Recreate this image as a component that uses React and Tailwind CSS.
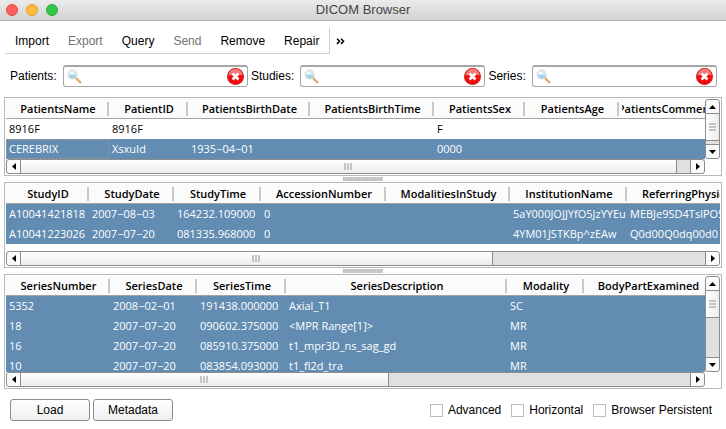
import React from "react";

const patients = {
  columns: [
    ["PatientsName", 103],
    ["PatientID", 79],
    ["PatientsBirthDate", 122],
    ["PatientsBirthTime", 124],
    ["PatientsSex", 91],
    ["PatientsAge", 94],
    ["PatientsComments", 98],
  ],
  rows: [
    { cells: ["8916F", "8916F", "", "", "F", "", ""] },
    { cells: ["CEREBRIX", "XsxuId", "1935−04−01", "", "0000", "", ""], selected: true, focus: true },
  ],
};

const studies = {
  columns: [
    ["StudyID", 83],
    ["StudyDate", 85],
    ["StudyTime", 87],
    ["AccessionNumber", 125],
    ["ModalitiesInStudy", 124],
    ["InstitutionName", 117],
    ["ReferringPhysicianName", 160],
  ],
  rows: [
    { cells: ["A10041421818", "2007−08−03", "164232.109000", "0", "", "5aY000JOJJYfO5JzYYEu", "MEBJe9SD4TslPO5z"], selected: true },
    { cells: ["A10041223026", "2007−07−20", "081335.968000", "0", "", "4YM01JSTKBp^zEAw", "Q0d00Q0dq00d0"], selected: true },
  ],
};

const series = {
  columns: [
    ["SeriesNumber", 104],
    ["SeriesDate", 87],
    ["SeriesTime", 89],
    ["SeriesDescription", 221],
    ["Modality", 77],
    ["BodyPartExamined", 128],
  ],
  rows: [
    { cells: ["5352", "2008−02−01", "191438.000000", "Axial_T1", "SC", ""], selected: true },
    { cells: ["18", "2007−07−20", "090602.375000", "<MPR Range[1]>", "MR", ""], selected: true },
    { cells: ["16", "2007−07−20", "085910.375000", "t1_mpr3D_ns_sag_gd", "MR", ""], selected: true },
    { cells: ["10", "2007−07−20", "083854.093000", "t1_fl2d_tra", "MR", ""], selected: true },
  ],
};

const arrows = {
  up: "M0 4h7L3.5 0z",
  down: "M0 0h7L3.5 4z",
  left: "M4 0v7L0 3.5z",
  right: "M0 0v7L4 3.5z",
};

function Arrow({ dir }) {
  const flat = dir === "up" || dir === "down";
  return (
    <svg width={flat ? 7 : 4} height={flat ? 4 : 7} aria-hidden="true">
      <path d={arrows[dir]} fill="#000" />
    </svg>
  );
}

function Magnifier() {
  return (
    <svg width="16" height="16" viewBox="0 0 16 16" className="shrink-0" aria-hidden="true">
      <path d="M9.3 9.3l4 4" stroke="#d39a4e" strokeWidth="2.2" strokeLinecap="round" />
      <path d="M9.6 9l3.6 3.6" stroke="#f5cf90" strokeWidth="1" strokeLinecap="round" />
      <circle cx="5.6" cy="5.6" r="4.4" fill="#d6edf6" stroke="#d5dce1" strokeWidth="1.2" />
      <path d="M2 5.8h7.2a3.6 3.6 0 0 1-7.2 0z" fill="#a5d4e8" />
      <ellipse cx="4.6" cy="3.7" rx="2.3" ry="1.5" fill="#f6fcff" />
    </svg>
  );
}

function ClearIcon() {
  return (
    <svg width="17" height="17" viewBox="0 0 16 16" aria-hidden="true">
      <circle cx="8" cy="8" r="7.5" fill="#f40909" stroke="#d32020" />
      <path d="M1.4 7.2a6.6 6.4 0 0 1 13.2 0C11 5.6 6 6.2 1.4 7.2z" fill="#f47c7c" />
      <path d="M5.2 5.2l5.6 5.6M10.8 5.2l-5.6 5.6" stroke="#fff" strokeWidth="2.6" />
    </svg>
  );
}

function SearchField({ id, label }) {
  return (
    <>
      <label htmlFor={id} className="pr-[3px]">{label}</label>
      <div className="flex h-[22px] min-w-0 flex-1 items-center rounded-[3px] border border-t-2 border-[#a6a6a6] bg-white px-[3px]">
        <Magnifier />
        <input id={id} type="text" className="min-w-0 flex-1 bg-transparent px-1 outline-none" />
        <button type="button" aria-label={`Clear ${id}`}>
          <ClearIcon />
        </button>
      </div>
    </>
  );
}

function DataTable({ columns, rows }) {
  return (
    <table className="w-max border-separate border-spacing-0">
      <thead>
        <tr>
          {columns.map(([name, width]) => (
            <th key={name} className="h-5 border-b border-[#a3a3a3] bg-[#fbfbfb] p-0 font-semibold">
              <div style={{ width }} className="flex items-center pl-[3px]">
                <div className="flex min-w-0 flex-1 justify-center overflow-hidden whitespace-nowrap">{name}</div>
                <div className="h-[14px] w-[2px] shrink-0 bg-[#c8c8c8]" />
              </div>
            </th>
          ))}
        </tr>
      </thead>
      <tbody>
        {rows.map((row, r) => (
          <tr key={r} className={row.selected ? "bg-[#628cb2] text-white" : "bg-white text-black"}>
            {row.cells.map((cell, c) => (
              <td
                key={c}
                className={
                  row.focus && c === 0
                    ? "h-5 max-w-0 border border-dotted border-[#a59c91] px-[2px] py-0 whitespace-nowrap"
                    : "h-5 max-w-0 px-[3px] py-0 whitespace-nowrap"
                }
              >
                {cell}
              </td>
            ))}
          </tr>
        ))}
      </tbody>
    </table>
  );
}

function HorizontalBar({ thumb }) {
  return (
    <div className="flex h-[15px] rounded-[3px] border border-[#8c8c8c] bg-[#e0e0e0]">
      <button type="button" aria-label="Scroll left" className="flex w-[14px] items-center justify-center rounded-l-[3px] border-r border-[#8c8c8c] bg-[#fafafa]">
        <Arrow dir="left" />
      </button>
      <div className="min-w-0 flex-1">
        <div
          style={{ width: `${thumb}%` }}
          className="flex h-full items-center justify-center gap-px border-r border-[#8c8c8c] bg-linear-to-b from-white to-[#ececec]"
        >
          <i className="h-[7px] w-[2px] bg-[#c4c4c4]" />
          <i className="h-[7px] w-[2px] bg-[#c4c4c4]" />
          <i className="h-[7px] w-[2px] bg-[#c4c4c4]" />
        </div>
      </div>
      <button type="button" aria-label="Scroll right" className="flex w-[14px] items-center justify-center rounded-r-[3px] border-l border-[#8c8c8c] bg-[#fafafa]">
        <Arrow dir="right" />
      </button>
    </div>
  );
}

function VerticalBar() {
  return (
    <div className="flex w-[15px] shrink-0 flex-col rounded-[3px] border border-[#8c8c8c] bg-[#e0e0e0]">
      <button type="button" aria-label="Scroll up" className="flex h-[14px] items-center justify-center rounded-t-[3px] border-b border-[#8c8c8c] bg-[#fafafa]">
        <Arrow dir="up" />
      </button>
      <div className="flex-1">
        <div className="flex h-[27px] flex-col items-center justify-center gap-px border-b border-[#8c8c8c] bg-linear-to-r from-white to-[#ececec]">
          <i className="h-[2px] w-[7px] bg-[#c4c4c4]" />
          <i className="h-[2px] w-[7px] bg-[#c4c4c4]" />
          <i className="h-[2px] w-[7px] bg-[#c4c4c4]" />
        </div>
      </div>
      <button type="button" aria-label="Scroll down" className="flex h-[14px] items-center justify-center rounded-b-[3px] border-t border-[#8c8c8c] bg-[#fafafa]">
        <Arrow dir="down" />
      </button>
    </div>
  );
}

function Panel({ data, height, thumb, vertical }) {
  return (
    <section className="border border-[#b8b8b8] bg-white p-px font-['Open_Sans','Noto_Sans',sans-serif] text-[11px] leading-4">
      <div className="flex">
        <div style={{ height }} className="min-w-0 flex-1 overflow-hidden">
          <DataTable {...data} />
        </div>
        {vertical && <VerticalBar />}
      </div>
      <div className={vertical ? "pr-[15px]" : ""}>
        <HorizontalBar thumb={thumb} />
      </div>
    </section>
  );
}

function Splitter() {
  return (
    <div className="flex h-[6px] items-center justify-center">
      <div className="h-1 w-10 bg-[repeating-linear-gradient(90deg,#bdbdbd_0_1px,#cfcfcf_1px_2px)]" />
    </div>
  );
}

function Check({ id, label }) {
  return (
    <div className="flex items-center gap-[5px]">
      <input id={id} type="checkbox" className="size-[13px] appearance-none border border-[#bdbdbd] bg-white checked:bg-[#628cb2]" />
      <label htmlFor={id}>{label}</label>
    </div>
  );
}

export default function App() {
  const push =
    "h-[22px] w-20 rounded-[3px] border border-[#8c8c8c] bg-linear-to-b from-white to-[#efefef]";
  return (
    <div className="min-h-screen bg-white font-['Liberation_Sans',Arial,sans-serif] text-xs leading-4 text-black">
      <header className="flex h-[21px] items-center border-b border-[#b1b1b1] bg-linear-to-b from-[#ebebeb] to-[#d3d3d3] px-[6px]">
        <div className="flex flex-1 gap-2">
          <span className="size-3 rounded-full border border-[#e2463f] bg-[#fc615d]" />
          <span className="size-3 rounded-full border border-[#dfa023] bg-[#fdbc40]" />
          <span className="size-3 rounded-full border border-[#27aa35] bg-[#34c84a]" />
        </div>
        <h1 className="text-[13px] text-[#454545]">DICOM Browser</h1>
        <div className="flex-1" />
      </header>

      <nav className="flex items-center gap-[6px] pt-[7px] pl-[5px]">
        <div className="flex h-[26px] items-center gap-[19px] border-r border-b border-[#cfcfcf] pr-[10px] pl-[10px]">
          <button type="button">Import</button>
          <button type="button" disabled className="text-[#737373]">Export</button>
          <button type="button">Query</button>
          <button type="button" disabled className="text-[#737373]">Send</button>
          <button type="button">Remove</button>
          <button type="button">Repair</button>
        </div>
        <button type="button" aria-label="More actions">
          <svg width="9" height="7" viewBox="0 0 9 7" fill="none" stroke="#000" strokeWidth="1.5" aria-hidden="true">
            <path d="M1 .7l2.6 2.6L1 5.9M5 .7l2.6 2.6L5 5.9" />
          </svg>
        </button>
      </nav>

      <form className="flex items-center gap-[3px] pt-[11px] pr-[9px] pl-[10px]">
        <SearchField id="patients" label="Patients:" />
        <SearchField id="studies" label="Studies:" />
        <SearchField id="series" label="Series:" />
      </form>

      <main className="px-1 pt-[10px]">
        <Panel data={patients} height={60} thumb={98} vertical />
        <Splitter />
        <Panel data={studies} height={67} thumb={69} />
        <Splitter />
        <Panel data={series} height={96} thumb={55} vertical />
      </main>

      <footer className="flex items-center justify-between pt-[10px] pr-[14px] pl-[10px]">
        <div className="flex gap-[3px]">
          <button type="button" className={push}>Load</button>
          <button type="button" className={push}>Metadata</button>
        </div>
        <div className="flex gap-[10px]">
          <Check id="advanced" label="Advanced" />
          <Check id="horizontal" label="Horizontal" />
          <Check id="persistent" label="Browser Persistent" />
        </div>
      </footer>
    </div>
  );
}
